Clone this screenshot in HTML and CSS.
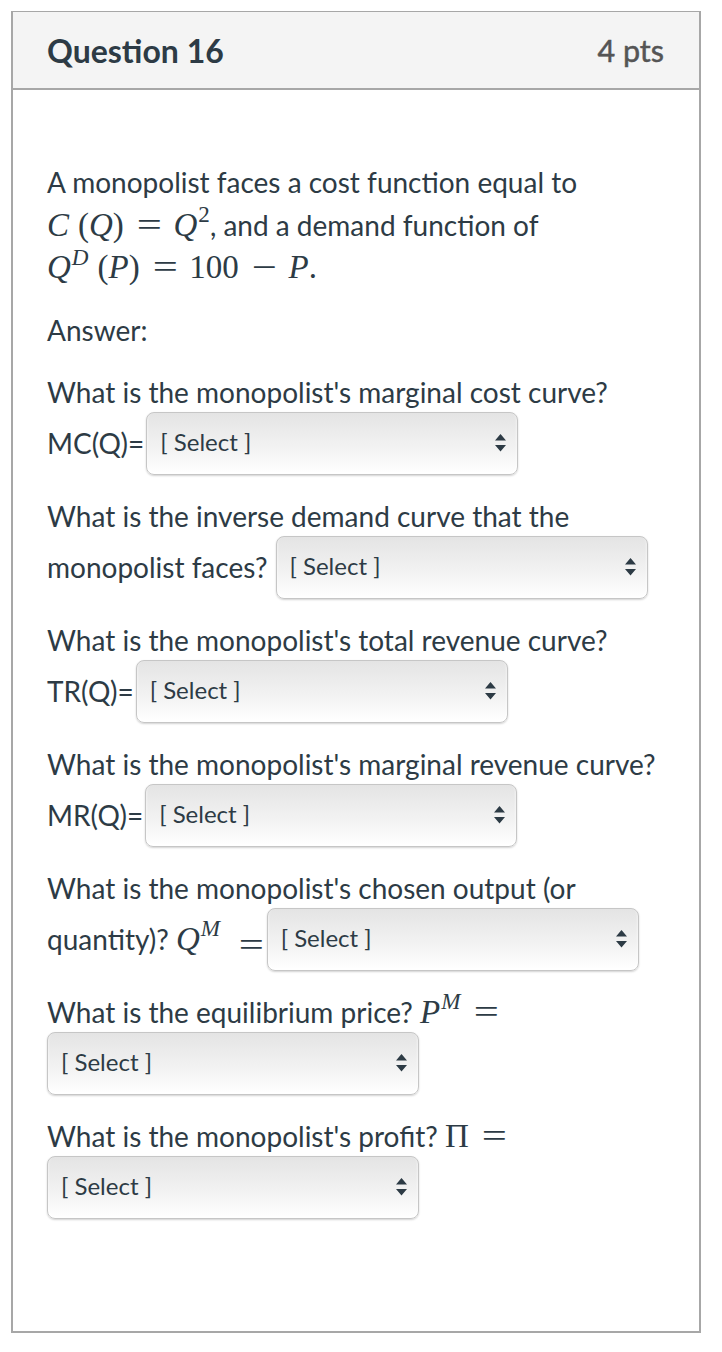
FILE: index.html
```html
<!DOCTYPE html>
<html>
<head>
<meta charset="utf-8">
<link rel="stylesheet" href="styles.css">
</head>
<body>
<div class="question">
  <div class="header">
    <span class="qname">Question 16</span>
    <span class="pts">4 pts</span>
  </div>
  <div class="content">
    <div class="intro">
      <div class="ln">A monopolist faces a cost function equal to</div>
      <div class="ln"><span class="m"><i>C</i><span class="fa"></span>(<i>Q</i>)<span class="op">=</span><i>Q</i><sup>2</sup></span>, and a demand function of</div>
      <div class="ln"><span class="m"><i>Q</i><sup><i>D</i></sup><span class="fa"></span>(<i>P</i>)<span class="op">=</span>100<span class="op">−</span><i>P</i>.</span></div>
    </div>
    <div class="answer">Answer:</div>

    <div class="q">
      <div class="qt">What is the monopolist's marginal cost curve?</div>
      <div class="row"><span class="lbl">MC(Q)=</span><div class="sel"><span>[ Select ]</span><svg class="arr" width="11" height="18" viewBox="0 0 11 18"><path d="M5.5 0 L11 6.5 L0 6.5 Z M0 11 L11 11 L5.5 17.5 Z" fill="#2d3b45"/></svg></div></div>
    </div>

    <div class="q">
      <div class="qt">What is the inverse demand curve that the</div>
      <div class="row"><span class="lbl">monopolist faces?</span><div class="sel gap"><span>[ Select ]</span><svg class="arr" width="11" height="18" viewBox="0 0 11 18"><path d="M5.5 0 L11 6.5 L0 6.5 Z M0 11 L11 11 L5.5 17.5 Z" fill="#2d3b45"/></svg></div></div>
    </div>

    <div class="q">
      <div class="qt">What is the monopolist's total revenue curve?</div>
      <div class="row"><span class="lbl">TR(Q)=</span><div class="sel"><span>[ Select ]</span><svg class="arr" width="11" height="18" viewBox="0 0 11 18"><path d="M5.5 0 L11 6.5 L0 6.5 Z M0 11 L11 11 L5.5 17.5 Z" fill="#2d3b45"/></svg></div></div>
    </div>

    <div class="q">
      <div class="qt">What is the monopolist's marginal revenue curve?</div>
      <div class="row"><span class="lbl">MR(Q)=</span><div class="sel"><span>[ Select ]</span><svg class="arr" width="11" height="18" viewBox="0 0 11 18"><path d="M5.5 0 L11 6.5 L0 6.5 Z M0 11 L11 11 L5.5 17.5 Z" fill="#2d3b45"/></svg></div></div>
    </div>

    <div class="q">
      <div class="qt">What is the monopolist's chosen output (or</div>
      <div class="row"><span class="lbl">quantity)? <span class="m"><i>Q</i><sup><i>M</i></sup><span class="op eq2">=</span></span></span><div class="sel"><span>[ Select ]</span><svg class="arr" width="11" height="18" viewBox="0 0 11 18"><path d="M5.5 0 L11 6.5 L0 6.5 Z M0 11 L11 11 L5.5 17.5 Z" fill="#2d3b45"/></svg></div></div>
    </div>

    <div class="q">
      <div class="qt">What is the equilibrium price? <span class="m"><i>P</i><sup><i>M</i></sup><span class="op">=</span></span></div>
      <div class="row"><div class="sel"><span>[ Select ]</span><svg class="arr" width="11" height="18" viewBox="0 0 11 18"><path d="M5.5 0 L11 6.5 L0 6.5 Z M0 11 L11 11 L5.5 17.5 Z" fill="#2d3b45"/></svg></div></div>
    </div>

    <div class="q">
      <div class="qt">What is the monopolist's profit? <span class="m">Π<span class="op">=</span></span></div>
      <div class="row"><div class="sel"><span>[ Select ]</span><svg class="arr" width="11" height="18" viewBox="0 0 11 18"><path d="M5.5 0 L11 6.5 L0 6.5 Z M0 11 L11 11 L5.5 17.5 Z" fill="#2d3b45"/></svg></div></div>
    </div>
  </div>
</div>
</body>
</html>
```

FILE: styles.css
```css
html, body {
  margin: 0;
  padding: 0;
  background: #fff;
}
body {
  padding: 11px 21px 0 11px;
  font-family: Lato, "Open Sans", sans-serif;
  color: #2d3b45;
}
.question {
  width: 686px;
  border: 2px solid #a7a7a7;
  box-sizing: content-box;
}
.header {
  height: 76px;
  background: #f4f4f4;
  border-bottom: 2px solid #a7a7a7;
  display: flex;
  align-items: center;
  justify-content: space-between;
  padding: 0 35px 0 34px;
  margin-top: -1px;
}
.qname {
  font-size: 32px;
  font-weight: 700;
  color: #2d3b45;
}
.pts {
  font-size: 30.5px;
  font-weight: 400;
  color: #555555;
  -webkit-text-stroke: 0.5px #555555;
}
.content {
  height: 1241px;
  padding: 71px 10px 0 34px;
  box-sizing: border-box;
  font-size: 28px;
}
.intro .ln {
  height: 42.5px;
  line-height: 42.5px;
  white-space: nowrap;
}
.m {
  font-family: "Liberation Serif", "Times New Roman", serif;
  font-size: 33px;
  color: #2d3b45;
}
.m sup {
  font-size: 0.7em;
  line-height: 0;
  vertical-align: 0.58em;
  margin-left: 1px;
}
.fa {
  display: inline-block;
  width: 9px;
}
.op {
  display: inline-block;
  margin: 0 15px 0 16px;
  font-style: normal;
  transform: scaleX(1.35);
}
.eq2 {
  margin-left: 22px;
  margin-right: 4px;
  position: relative;
  top: 6px;
}
.answer {
  margin-top: 23px;
  height: 36px;
  line-height: 36px;
}
.q {
  margin-top: 26px;
}
.q + .q {
  margin-top: 23px;
}
.qt {
  height: 36px;
  line-height: 36px;
  white-space: nowrap;
}
.row {
  margin-top: 2px;
  height: 63px;
  display: flex;
  align-items: center;
}
.lbl {
  white-space: nowrap;
  margin-right: 2px;
}
.sel.gap {
  margin-left: 6px;
}
.sel {
  box-sizing: border-box;
  flex: 0 0 372px;
  width: 372px;
  height: 63px;
  border: 1px solid #c6c6c6;
  border-radius: 8px;
  background: linear-gradient(#e4e4e4, #f3f3f3 60%, #ffffff);
  box-shadow: 0 1px 2px rgba(0, 0, 0, 0.18), inset 0 -2px 3px rgba(255,255,255,0.9);
  display: flex;
  align-items: center;
  justify-content: space-between;
  padding: 0 11px 4px 13px;
  font-size: 24px;
  color: #2d3b45;
}
.arr {
  display: block;
  margin-top: 4px;
}
```
